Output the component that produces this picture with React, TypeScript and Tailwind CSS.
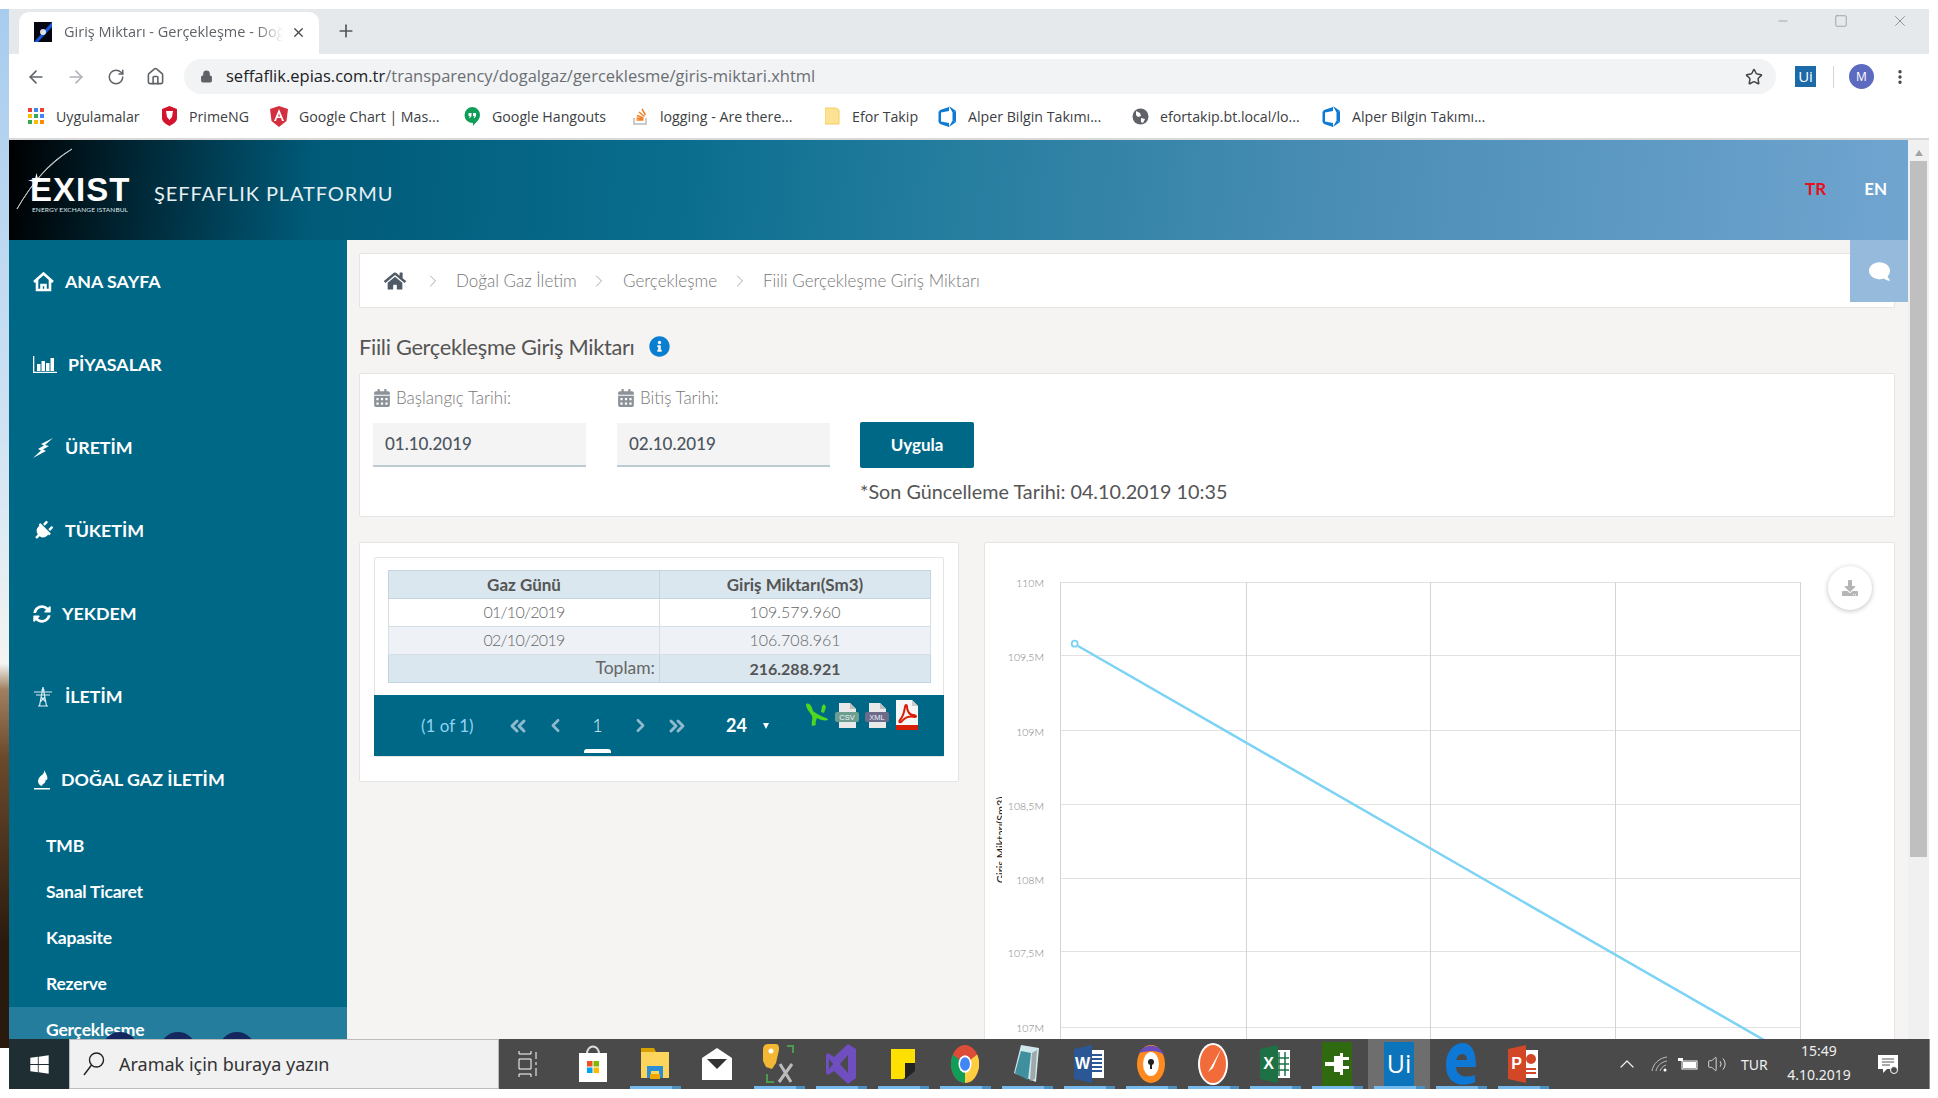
import React from 'react';
import { ArrowLeft, ArrowRight, RotateCw, Home, Lock, Star, EllipsisVertical, X, Plus, Minus, Square, ChevronRight, ChevronLeft, ChevronsLeft, ChevronsRight, ChevronUp, Volume2 } from 'lucide-react';
import { FaHome, FaPlug, FaSyncAlt, FaInfoCircle, FaComment, FaWindows, FaDownload, FaCalendarAlt } from 'react-icons/fa';

const Bars = () => (
  <svg width="24" height="17" viewBox="0 0 24 17" fill="white" className="shrink-0"><path d="M0 0h1.300v15.700H24V17H0z" /><rect x="4" y="8" width="3.500" height="7" /><rect x="8.500" y="5" width="3.500" height="10" /><rect x="13" y="7" width="3.500" height="8" /><rect x="17.500" y="2" width="3.500" height="13" /></svg>
);
const Pylon = () => (
  <svg width="20" height="20" viewBox="0 0 20 20" fill="none" stroke="#dbeef5" strokeWidth="1.200"><path d="M1 5h18M3 8h14M10 0L6.500 19M10 0l3.500 19M8 10l5 5M12 10l-5 5M5 19h10" /><path d="M8.500 3h3" /></svg>
);
const Flame = () => (
  <svg width="18" height="20" viewBox="0 0 18 20" fill="white"><path d="M11 0C12 4 8 5 6 8c-2 3-1 7 3 8 0-1 1-2 2-2.500 1-1 2-2 1.500-4C14 11 15 9 14 6c-.5-2-2-4-3-6z" /><rect x="1" y="18" width="16" height="1.500" /></svg>
);

const Icon = ({ name }: { name: string }) => {
  if (name === 'home') return <svg width="21" height="20" viewBox="0 0 21 20" fill="none" stroke="white" strokeWidth="2.600"><path d="M1 10L10.500 1.500 20 10M4 8v10h13V8M8.500 18v-5h4v5" /></svg>;
  if (name === 'bars') return <Bars />;
  if (name === 'bolt') return <svg width="21" height="20" viewBox="0 0 21 20" fill="white"><path d="M20 0L8 6l3 1.500L5 11l3 1.500L0 20l13-7-3-1.500 6-3.500-4-1z" /></svg>;
  if (name === 'plug') return <FaPlug size={20} color="white" className="rotate-45" />;
  if (name === 'sync') return <FaSyncAlt size={18} color="white" />;
  if (name === 'pylon') return <Pylon />;
  return <Flame />;
};

const menu = [
  { t: 'ANA SAYFA', i: 'home', c: 'ml-[11px]' },
  { t: 'PİYASALAR', i: 'bars', c: 'ml-[14px]' },
  { t: 'ÜRETİM', i: 'bolt', c: 'ml-[11px]' },
  { t: 'TÜKETİM', i: 'plug', c: 'ml-[11px]' },
  { t: 'YEKDEM', i: 'sync', c: 'ml-[8px]' },
  { t: 'İLETİM', i: 'pylon', c: 'ml-[11px]' },
  { t: 'DOĞAL GAZ İLETİM', i: 'flame', c: 'ml-[7px]' },
];

const Cal = () => <FaCalendarAlt size={18} className="text-[#8b9299]" />;

const Bm = ({ w, icon, t }: { w: string; icon: React.ReactNode; t: string }) => (
  <div className={`${w} flex items-center gap-3 shrink-0`}>
    <span className="w-4 h-4 flex items-center justify-center shrink-0">{icon}</span>
    <span className="text-[14.200px] text-[#3c4043] whitespace-nowrap">{t}</span>
  </div>
);

const Devops = () => (
  <svg width="20" height="21" viewBox="0 0 20 21" fill="#0f7ad1" className="shrink-0"><path d="M11 5L3 6.500v9L11 17v4l-9-3-1.500-2V6L2 4l9-3z" /><path d="M11 0l7 5-3.500 1.500zM11 21l7-5-3.500-1.500z" /><path d="M14.500 6.500L18 5v11l-3.500-1.500z" /></svg>
);

const Apps = () => (
  <svg width="16" height="16" viewBox="0 0 16 16">
    {[['#ea4335', 0, 0], ['#4285f4', 6, 0], ['#ea4335', 12, 0], ['#fbbc05', 0, 6], ['#34a853', 6, 6], ['#4285f4', 12, 6], ['#34a853', 0, 12], ['#fbbc05', 6, 12], ['#fb8c00', 12, 12]].map(([c, x, y], i) => (
      <rect key={i} x={x as number} y={y as number} width="4" height="4" fill={c as string} />
    ))}
  </svg>
);

const bookmarks = [
  { w: 'w-[133px]', t: 'Uygulamalar', icon: <Apps /> },
  { w: 'w-[110px]', t: 'PrimeNG', icon: <svg width="17" height="20" viewBox="0 0 17 20" className="shrink-0"><path d="M8.500 0L16 3v9c0 4-4 6-7.500 8C5 18 1 16 1 12V3z" fill="#d3142f" /><path d="M5 5h7l-1 6-2.500 3L6 11z" fill="white" /></svg> },
  { w: 'w-[193px]', t: 'Google Chart | Mas...', icon: <svg width="18" height="21" viewBox="0 0 18 21" className="shrink-0"><path d="M9 0l9 3-1.500 12L9 21l-7.500-6L0 3z" fill="#d32f3f" /><path d="M9 3l-5 12h2l1-3h4l1 3h2zM8 10.500l1-3 1 3z" fill="white" /></svg> },
  { w: 'w-[168px]', t: 'Google Hangouts', icon: <svg width="16" height="19" viewBox="0 0 16 19"><path d="M8 0a8 8 0 018 8c0 5-5 8-7 11v-3a8 8 0 01-1-16z" fill="#0f9d58" /><path d="M4.500 6h3v3L6 11H5l1-2H4.500zM9 6h3v3l-1.500 2h-1l1-2H9z" fill="white" /></svg> },
  { w: 'w-[192px]', t: 'logging - Are there...', icon: <svg width="15" height="18" viewBox="0 0 15 18"><path d="M1 11v6h12v-6" fill="none" stroke="#bcbbbb" strokeWidth="1.500" /><path d="M3.500 13h7M3.500 11l7 1M4 8.500l6.500 2.500M6 5l5.500 4.500M9 2l3.500 6" stroke="#f48024" strokeWidth="1.500" /></svg> },
  { w: 'w-[116px]', t: 'Efor Takip', icon: <svg width="15" height="18" viewBox="0 0 15 18"><path d="M0 1h11l3 2v14H0z" fill="#fde293" stroke="#f5cf5f" /></svg> },
  { w: 'w-[192px]', t: 'Alper Bilgin Takımı...', icon: <Devops /> },
  { w: 'w-[192px]', t: 'efortakip.bt.local/lo...', icon: <svg width="17" height="17" viewBox="0 0 17 17" className="shrink-0"><circle cx="8.500" cy="8.500" r="8" fill="#5f6368" /><path d="M4 3l4 2 1 3-3 1-2-2zM9 10l4 1-2 4-2-1z" fill="white" /></svg> },
  { w: 'w-[150px]', t: 'Alper Bilgin Takımı...', icon: <Devops /> },
];

const FileIcon = ({ label, band }: { label: string; band: string }) => (
  <svg width="24" height="26" viewBox="0 0 24 26">
    <path d="M4 0h11l6 6v19H4z" fill="#e9e9e9" />
    <path d="M15 0l6 6h-6z" fill="#bfbfbf" />
    <rect x="0" y="9" width="24" height="10" rx="2" fill={band} />
    <text x="12" y="17" textAnchor="middle" fontSize="7.500" fill="#eef" fontFamily="'Liberation Sans',sans-serif">{label}</text>
  </svg>
);

const TaskIcons: Record<string, React.ReactNode> = {
  store: <svg width="30" height="38" viewBox="0 0 30 38"><path d="M9 9c0-10 12-10 12 0" fill="none" stroke="#ddd" strokeWidth="2" /><rect x="1" y="8" width="28" height="29" fill="white" /><rect x="9" y="16" width="5.500" height="5.500" fill="#f25022" /><rect x="15.500" y="16" width="5.500" height="5.500" fill="#7fba00" /><rect x="9" y="22.500" width="5.500" height="5.500" fill="#00a4ef" /><rect x="15.500" y="22.500" width="5.500" height="5.500" fill="#ffb900" /></svg>,
  folder: <svg width="30" height="32" viewBox="0 0 30 32"><path d="M1 0h13l2 4H1z" fill="#d9a100" /><rect x="1" y="4" width="28" height="26" fill="#fdd45c" /><path d="M7 30V18h16v12h-4v-7h-8v7z" fill="#2b8fd6" /><rect x="10" y="26" width="10" height="5" fill="#f3a600" /></svg>,
  mail: <svg width="30" height="32" viewBox="0 0 30 32"><path d="M0 10L15 0l15 10v22H0z" fill="white" /><path d="M5 11h20L15 21z" fill="#333" /></svg>,
  tools: <svg width="32" height="40" viewBox="0 0 32 40"><path d="M5 0h8c3 0 3 3 3 6l-3 13-4 6-6-2-3-6V6c0-3 1-6 5-6z" fill="#f2b733" /><circle cx="8" cy="7" r="2.500" fill="white" /><path d="M24 2h6v7M4 30v8h7" fill="none" stroke="#4c9a4c" strokeWidth="2" /><path d="M17 20l11 18M29 20L16 38" stroke="#bbb" strokeWidth="3" /></svg>,
  vs: <svg width="30" height="40" viewBox="0 0 30 40"><path d="M22 0l8 5v29l-8 6-14-13-6 4-2-2V11l2-2 6 4zM22 11l-8 9 8 9zM3 15v10l4-5z" fill="#6f4fc0" /></svg>,
  sticky: <svg width="24" height="30" viewBox="0 0 24 30"><path d="M0 0h24v21l-12 9H0z" fill="#ffe000" /><path d="M24 14v8l-10 8v-16z" fill="#222" /></svg>,
  chrome: <svg width="28" height="38" viewBox="0 0 28 28" preserveAspectRatio="none"><circle cx="14" cy="14" r="14" fill="#dd4b39" /><path d="M14 14L1.800 7A14 14 0 002 21 14 14 0 0014 28z" fill="#0f9d58" /><path d="M14 14v14A14 14 0 0026.200 7z" fill="#ffcd40" /><circle cx="14" cy="14" r="6.500" fill="white" /><circle cx="14" cy="14" r="5" fill="#4285f4" /></svg>,
  glass: <svg width="26" height="38" viewBox="0 0 26 38"><path d="M7 0l18 3-3 34L0 28z" fill="#cfe8ec" /><path d="M1 28L7 6l10 2-3 27z" fill="#3f8f9f" /><path d="M18 8l5-3-2 29-5 2z" fill="#9fa9ab" /></svg>,
  word: <svg width="30" height="38" viewBox="0 0 30 38"><rect x="14" y="5" width="16" height="28" fill="white" /><path d="M17 10h11M17 14h11M17 18h11M17 22h11M17 26h11" stroke="#2b5797" strokeWidth="2" /><path d="M0 4L18 0v38L0 34z" fill="#2b5797" /><text x="8.500" y="24" textAnchor="middle" fontSize="16" fontWeight="700" fill="white" fontFamily="'Liberation Sans',sans-serif">W</text></svg>,
  orange: <svg width="28" height="38" viewBox="0 0 28 38"><ellipse cx="14" cy="19" rx="14" ry="19" fill="#ff8a1f" /><path d="M2 8C8-2 22-2 27 10 20 4 10 6 2 8z" fill="#6b4bbd" /><ellipse cx="14" cy="19" rx="8" ry="12" fill="white" /><circle cx="14" cy="17" r="3" fill="#222" /><rect x="13" y="18" width="2" height="6" fill="#222" /></svg>,
  postman: <svg width="30" height="42" viewBox="0 0 30 42"><ellipse cx="15" cy="21" rx="15" ry="21" fill="#fff" /><ellipse cx="15" cy="21" rx="13" ry="19" fill="#f26b3a" /><path d="M23 6l-10 18-3 5 5-4 8-19z" fill="white" /></svg>,
  excel: <svg width="30" height="38" viewBox="0 0 30 38"><rect x="14" y="5" width="16" height="28" fill="white" /><path d="M19 7v24M25 7v24M16 13h13M16 19h13M16 25h13" stroke="#1e7145" strokeWidth="1.500" /><path d="M0 4L18 0v38L0 34z" fill="#1e7145" /><text x="8.500" y="24" textAnchor="middle" fontSize="16" fontWeight="700" fill="white" fontFamily="'Liberation Sans',sans-serif">X</text></svg>,
  plug: <svg width="30" height="44" viewBox="0 0 30 44"><rect width="30" height="44" fill="#2f6a10" /><path d="M3 20h9v-6h6v-3h3v22h-3v-3h-6v-6H3zM21 15h6v3h-6zM21 24h6v3h-6z" fill="white" /></svg>,
  ui: <div className="w-[30px] h-[44px] bg-[#0b74bb] text-white text-[25px] flex items-center justify-center font-['Open_Sans',sans-serif]">Ui</div>,
  edge: <svg width="30" height="42" viewBox="0 0 30 42"><path d="M0 22C0 8 8 0 17 0c9 0 13 9 13 24H10c0 8 8 12 19 8v7c-12 6-29 3-29-17zM10 17h11c0-8-9-8-11 0z" fill="#0d78d6" /></svg>,
  ppt: <svg width="30" height="38" viewBox="0 0 30 38"><rect x="14" y="5" width="16" height="28" fill="white" /><circle cx="23" cy="14" r="5" fill="#d24726" /><path d="M17 24h11M17 28h11" stroke="#d24726" strokeWidth="2" /><path d="M0 4L18 0v38L0 34z" fill="#d24726" /><text x="8.500" y="24" textAnchor="middle" fontSize="16" fontWeight="700" fill="white" fontFamily="'Liberation Sans',sans-serif">P</text></svg>,
};

const tasks = [
  { k: 'store', u: false }, { k: 'folder', u: true }, { k: 'mail', u: false }, { k: 'tools', u: true },
  { k: 'vs', u: true }, { k: 'sticky', u: true }, { k: 'chrome', u: true }, { k: 'glass', u: true },
  { k: 'word', u: true }, { k: 'orange', u: true }, { k: 'postman', u: true }, { k: 'excel', u: true },
  { k: 'plug', u: true }, { k: 'ui', u: true }, { k: 'edge', u: true }, { k: 'ppt', u: true },
];

const gridY = [582, 655, 730, 804, 878, 951, 1027];
const gridX = [1060, 1246, 1430, 1615, 1800];
const yLabels: [string, number][] = [['110M', 587], ['109,5M', 661], ['109M', 736], ['108,5M', 810], ['108M', 884], ['107,5M', 957], ['107M', 1032]];

const Chart = () => (
  <svg width="910" height="558" viewBox="985 543 910 558" className="block">
    <defs><clipPath id="axis"><rect x="996" y="796" width="6" height="90" /></clipPath></defs>
    {gridY.map((y) => <line key={y} x1="1060" x2="1800" y1={y + 0.5} y2={y + 0.5} stroke="#e2e2e2" strokeWidth="1" />)}
    {gridX.map((x) => <line key={x} x1={x + 0.5} x2={x + 0.5} y1="582" y2="1100" stroke="#d4d4d4" strokeWidth="1" />)}
    {yLabels.map(([t, y]) => <text key={t} x="1044" y={y} textAnchor="end" fontSize="10.500" fontWeight="300" fill="#7d7d7d" fontFamily="Lato, sans-serif">{t}</text>)}
    <g clipPath="url(#axis)">
      <text x="0" y="0" transform="translate(1005 883) rotate(-90)" fontSize="11" fill="#222" fontFamily="Lato, sans-serif">Giriş Miktarı(Sm3)</text>
    </g>
    <line x1="1078" y1="646" x2="1790" y2="1055" stroke="#7dd3f5" strokeWidth="2.500" />
    <circle cx="1074.700" cy="643.700" r="3" fill="white" stroke="#7dd3f5" strokeWidth="1.800" />
  </svg>
);

export default function App() {
  return (
    <div className="w-[1938px] h-[1098px] overflow-hidden bg-white flex font-['Lato',sans-serif] pt-[9px] pb-[9px]">
      <div className="w-[9px] h-[1039px] shrink-0 bg-[linear-gradient(180deg,#a7ccee_0%,#cfe2f3_40%,#f4f4f2_63%,#a08060_65.500%,#6b4a2c_72%,#2a1a0e_90%,#2a1a0e_100%)]" />
      <div className="w-[1920px] h-full flex flex-col shrink-0">
        {/* tab strip */}
        <div className="h-[45px] bg-[#e6e9ec] flex items-start shrink-0 font-['Open_Sans',sans-serif]">
          <div className="ml-[10px] mt-[3px] w-[300px] h-[42px] bg-white rounded-t-[10px] flex items-center pl-[15px] pb-[2px]">
            <svg width="18" height="20" viewBox="0 0 18 20" className="shrink-0"><rect width="18" height="20" fill="#05060f" /><path d="M18 0L0 20h4L18 5z" fill="#1957d8" /><circle cx="9" cy="10" r="3" fill="white" opacity=".85" /></svg>
            <span className="ml-[12px] w-[219px] overflow-hidden whitespace-nowrap text-[14.500px] text-[#5f6368] [mask-image:linear-gradient(90deg,black_88%,transparent)]">Giriş Miktarı - Gerçekleşme - Doğal Gaz</span>
            <X size={15} strokeWidth={2} className="ml-[8px] text-[#444] shrink-0" />
          </div>
          <Plus size={20} strokeWidth={2} className="ml-[17px] mt-[12px] text-[#555]" />
          <div className="flex-1 flex justify-end items-center h-[24px] text-[#777]">
            <Minus size={14} strokeWidth={1} className="mr-[44px]" />
            <Square size={14} strokeWidth={1} className="mr-[43px]" />
            <X size={18} strokeWidth={1} className="mr-[20px]" />
          </div>
        </div>
        {/* toolbar */}
        <div className="h-[45px] flex items-center shrink-0 pl-[17px] font-['Open_Sans',sans-serif]">
          <ArrowLeft size={20} className="text-[#5f6368]" strokeWidth={2} />
          <ArrowRight size={20} className="ml-[20px] text-[#b0b3b7]" strokeWidth={2} />
          <RotateCw size={18} className="ml-[21px] text-[#5f6368]" strokeWidth={2} />
          <Home size={19} className="ml-[21px] text-[#5f6368]" strokeWidth={2} />
          <div className="ml-[19px] w-[1592px] h-[35px] rounded-full bg-[#f1f3f4] flex items-center pl-[16px] shrink-0">
            <Lock size={13} fill="#5f6368" className="text-[#5f6368]" />
            <span className="ml-[13px] text-[16.500px] text-[#202124] whitespace-nowrap">seffaflik.epias.com.tr<span className="text-[#6b6f74]">/transparency/dogalgaz/gerceklesme/giris-miktari.xhtml</span></span>
            <Star size={18} strokeWidth={2} className="ml-auto mr-[13px] text-[#444]" />
          </div>
          <div className="ml-[19px] w-[21px] h-[21px] bg-[#1d6aa8] text-white text-[15px] flex items-center justify-center">Ui</div>
          <div className="ml-[17px] w-px h-[22px] bg-[#d5d5d5]" />
          <div className="ml-[15px] w-[25px] h-[25px] rounded-full bg-[#5c6bc0] text-white text-[12px] flex items-center justify-center">M</div>
          <EllipsisVertical size={18} className="ml-[17px] text-[#444]" strokeWidth={2.500} />
        </div>
        {/* bookmarks */}
        <div className="h-[41px] border-b-2 border-[#d9d9d9] flex items-center pl-[19px] pb-[4px] shrink-0 font-['Open_Sans',sans-serif]">
          {bookmarks.map((b, i) => <Bm key={i} {...b} />)}
        </div>
        {/* page */}
        <div className="flex-1 min-h-0 flex overflow-hidden">
          <div className="w-[1899px] shrink-0 flex flex-col relative">
            <header className="h-[100px] shrink-0 flex items-center bg-[linear-gradient(95deg,#000000_0%,#00222f_6%,#005a78_16%,#0a6d8e_35%,#267e9f_50%,#4a8db5_70%,#70a5d0_100%)] relative">
              <div className="ml-[21px] flex flex-col w-[100px] text-white pt-[10px]">
                <span className="font-['Liberation_Sans',sans-serif] font-bold text-[33px] leading-[30px] tracking-[1px] whitespace-nowrap">EXIST</span>
                <span className="text-[6.500px] leading-[10px] whitespace-nowrap tracking-[0.1px] text-[#dfe8ec] ml-[2px]">ENERGY EXCHANGE ISTANBUL</span>
              </div>
              <svg width="60" height="62" viewBox="0 0 60 62" className="absolute left-[4px] top-[8px]"><path d="M59 1C36 14 20 34 4 61 17 38 34 17 59 1z" stroke="white" strokeWidth="1" fill="white" opacity=".75" /><path d="M22 31l1.500-6 1.500 6 7 1.500-7 1.500-1.500 8-1.500-8-7-1.500z" fill="white" /></svg>
              <span className="ml-[24px] mt-[6px] text-[20px] font-normal tracking-[0.9px] text-[#e7f0f4] whitespace-nowrap">ŞEFFAFLIK PLATFORMU</span>
              <div className="ml-auto flex gap-[38px] mr-[21px] mb-[3px] text-[17px] font-bold">
                <span className="text-[#e80e1a]">TR</span>
                <span className="text-white">EN</span>
              </div>
            </header>
            <div className="flex-1 min-h-0 flex">
              {/* sidebar */}
              <nav className="w-[338px] shrink-0 bg-[#006887] flex flex-col text-white">
                {menu.map((m) => (
                  <div key={m.t} className="h-[83px] shrink-0 flex items-center pl-[24px]">
                    <span className="w-[21px] flex justify-start items-center shrink-0"><Icon name={m.i} /></span>
                    <span className={`${m.c} font-bold text-[17.800px] whitespace-nowrap`}>{m.t}</span>
                  </div>
                ))}
                <div className="mt-[2px]">
                  {['TMB', 'Sanal Ticaret', 'Kapasite', 'Rezerve'].map((s) => (
                    <div key={s} className="h-[46px] flex items-center pl-[37px] text-[17.500px] font-bold tracking-[-0.2px]">{s}</div>
                  ))}
                  <div className="h-[46px] flex items-center pl-[37px] text-[17.500px] font-bold tracking-[-0.2px] bg-[#247d9c] relative">
                    Gerçekleşme
                    <span className="absolute left-[93px] top-[25px] w-9 h-9 rounded-full bg-[#14285f]" />
                    <span className="absolute left-[151px] top-[25px] w-9 h-9 rounded-full bg-[#14285f]" />
                    <span className="absolute left-[210px] top-[25px] w-9 h-9 rounded-full bg-[#14285f]" />
                  </div>
                </div>
              </nav>
              {/* content */}
              <main className="flex-1 min-w-0 bg-[#f5f4f2] pl-[12px] pr-[13px] pt-[13px]">
                <div className="h-[55px] bg-white border border-[#e4e4e4] rounded-[2px] flex items-center text-[17px] font-light text-[#777] whitespace-nowrap">
                  <FaHome size={22} className="ml-[24px] text-[#4f5b66]" />
                  <ChevronRight size={20} strokeWidth={1} className="ml-[17px] text-[#999]" />
                  <span className="ml-[13px] w-[133px]">Doğal Gaz İletim</span>
                  <ChevronRight size={20} strokeWidth={1} className="text-[#999]" />
                  <span className="ml-[14px] w-[94px]">Gerçekleşme</span>
                  <ChevronRight size={20} strokeWidth={1} className="ml-[13px] text-[#999]" />
                  <span className="ml-[13px]">Fiili Gerçekleşme Giriş Miktarı</span>
                </div>
                <div className="h-[65px] flex items-center pt-[14px]">
                  <h1 className="text-[21.800px] text-[#555] font-normal tracking-[-0.3px] whitespace-nowrap">Fiili Gerçekleşme Giriş Miktarı</h1>
                  <FaInfoCircle size={21} className="ml-[14px] mb-[3px] text-[#0a7ed0]" />
                </div>
                {/* filter */}
                <div className="h-[144px] bg-white border border-[#e4e4e4] rounded-[2px] pl-[13px] pt-[12px] flex">
                  <div className="w-[213px]">
                    <div className="flex items-center gap-[5px] h-[24px] text-[17px] font-light text-[#777] whitespace-nowrap"><Cal />Başlangıç Tarihi:</div>
                    <div className="mt-[13px] h-[44px] bg-[#f4f4f4] border-b-2 border-[#bccbd2] flex items-center pl-[12px] text-[17px] font-medium text-[#4b5560]">01.10.2019</div>
                  </div>
                  <div className="w-[213px] ml-[31px]">
                    <div className="flex items-center gap-[5px] h-[24px] text-[17px] font-light text-[#777] whitespace-nowrap"><Cal />Bitiş Tarihi:</div>
                    <div className="mt-[13px] h-[44px] bg-[#f4f4f4] border-b-2 border-[#bccbd2] flex items-center pl-[12px] text-[17px] font-medium text-[#4b5560]">02.10.2019</div>
                  </div>
                  <div className="ml-[30px]">
                    <div className="mt-[36px] w-[114px] h-[46px] rounded-[2px] bg-[#006887] text-white font-bold text-[17px] flex items-center justify-center">Uygula</div>
                    <div className="mt-[9px] text-[19.800px] text-[#555] whitespace-nowrap">*Son Güncelleme Tarihi: 04.10.2019 10:35</div>
                  </div>
                </div>
                {/* lower */}
                <div className="mt-[25px] flex gap-[25px] items-start">
                  <div className="w-[600px] h-[240px] shrink-0 bg-white border border-[#e4e4e4] rounded-[2px] p-[14px]">
                    <div className="h-[200px] border border-[#e4e4e4] rounded-[2px] flex flex-col">
                      <div className="px-[13px] pt-[12px] h-[137px] shrink-0">
                        <table className="w-[543px] border-collapse text-[16px] text-[#666] table-fixed">
                          <tbody>
                            <tr className="h-[28px] bg-[#dae7ef] font-bold text-[#555] text-[17px]">
                              <td className="w-[271px] border border-[#c2d5e0] text-center">Gaz Günü</td>
                              <td className="border border-[#c2d5e0] text-center">Giriş Miktarı(Sm3)</td>
                            </tr>
                            <tr className="h-[28px] font-light">
                              <td className="border border-[#d5dfe6] text-center tracking-[-0.7px] pb-[2px]">01/10/2019</td>
                              <td className="border border-[#d5dfe6] text-center pb-[2px]">109.579.960</td>
                            </tr>
                            <tr className="h-[28px] bg-[#eef2f6] font-light">
                              <td className="border border-[#d5dfe6] text-center tracking-[-0.7px] pb-[2px]">02/10/2019</td>
                              <td className="border border-[#d5dfe6] text-center pb-[2px]">106.708.961</td>
                            </tr>
                            <tr className="h-[28px] bg-[#dae7ef]">
                              <td className="border border-[#c2d5e0] text-right pr-[4px] text-[17.500px]">Toplam:</td>
                              <td className="border border-[#c2d5e0] text-center font-bold text-[#555]">216.288.921</td>
                            </tr>
                          </tbody>
                        </table>
                      </div>
                      <div className="h-[61px] mx-[-1px] bg-[#006887] flex shrink-0 text-white">
                        <div className="ml-[47px] w-[85px] self-center text-[17px] text-[#8fd3f2] whitespace-nowrap">(1 of 1)</div>
                        <div className="w-[24px] flex items-center justify-center"><ChevronsLeft size={24} className="text-[#8fb9cc]" strokeWidth={3} /></div>
                        <div className="ml-[14px] w-[22px] flex items-center justify-center"><ChevronLeft size={21} className="text-[#8fb9cc]" strokeWidth={3} /></div>
                        <div className="ml-[18px] w-[27px] flex items-center justify-center relative text-[18px] font-light text-[#d8eef6]">1<span className="absolute left-0 right-0 bottom-[3px] h-[4px] bg-white rounded-t-[3px]" /></div>
                        <div className="ml-[17px] w-[24px] flex items-center justify-center"><ChevronRight size={21} className="text-[#8fb9cc]" strokeWidth={3} /></div>
                        <div className="ml-[13px] w-[24px] flex items-center justify-center"><ChevronsRight size={24} className="text-[#8fb9cc]" strokeWidth={3} /></div>
                        <div className="ml-[37px] w-[37px] self-center font-bold text-[18px]">24</div>
                        <div className="w-0 h-0 self-center border-x-[3.500px] border-x-transparent border-t-[6px] border-t-white" />
                        <div className="ml-[36px] flex items-start gap-[6px] pt-[8px]">
                          <svg width="24" height="24" viewBox="0 0 24 24"><path d="M1 1c4-2 6 3 7 7 2 2 5 3 8 5 2 1 7 2 7 4-3 1-8 0-11-2-1 3-2 5-1 7l-4 1c-1-4 1-7 0-10C5 9 1 6 1 1z" fill="#4fd61f" /><path d="M17 3l2-2 2 3-2 6-3-1z" fill="#4fd61f" /></svg>
                          <FileIcon label="CSV" band="#6e9e8f" />
                          <FileIcon label="XML" band="#6c6c8a" />
                          <svg width="24" height="30" viewBox="0 0 24 30" className="-mt-[3px]"><path d="M1 0h16l6 6v24H1z" fill="#f7f7f7" /><path d="M17 0l6 6h-6z" fill="#ccc" /><rect x="1" y="25" width="22" height="5" fill="#d81e05" /><path d="M11 5c-2 0 0 8-6 15-2 3 1 3 3 0 3-3 8-4 12-3 2 0 1-2-2-2-4 0-6-5-6-8 0-2 0-2-1-2z" fill="none" stroke="#d81e05" strokeWidth="2" /></svg>
                        </div>
                      </div>
                    </div>
                  </div>
                  <div className="flex-1 min-w-0 h-[560px] bg-white border border-[#e4e4e4] rounded-[2px] relative">
                    <Chart />
                    <div className="absolute left-[843px] top-[23px] w-11 h-11 rounded-full bg-white shadow-[0_1px_5px_rgba(0,0,0,0.25)] flex items-center justify-center">
                      <FaDownload size={16} className="text-[#b5b5b5]" />
                    </div>
                  </div>
                </div>
              </main>
            </div>
            <div className="absolute left-[1841px] top-[100px] w-[58px] h-[62px] bg-[#8fb6da]/95 flex items-center justify-center">
              <FaComment size={21} className="text-white -scale-x-100" />
            </div>
          </div>
          {/* scrollbar */}
          <div className="w-[21px] shrink-0 bg-[#f0f0f0] flex flex-col items-center">
            <div className="h-[21px] flex items-center justify-center pt-[4px]">
              <div className="w-0 h-0 border-x-[4.500px] border-x-transparent border-b-[6px] border-b-[#a3a3a3]" />
            </div>
            <div className="w-[17px] h-[696px] bg-[#bfbfbf]" />
          </div>
        </div>
        {/* taskbar */}
        <div className="h-[50px] shrink-0 bg-[#4a4a4a] flex font-['Noto_Sans',sans-serif] text-white">
          <div className="w-[60px] bg-[#1e2e33] flex items-center justify-center shrink-0"><FaWindows size={21} /></div>
          <div className="w-[430px] bg-[#f1f1f1] border border-[#bcbcbc] flex items-center pl-[13px] shrink-0 text-[#333]">
            <svg width="22" height="26" viewBox="0 0 22 26" fill="none" stroke="#222" strokeWidth="1.400"><circle cx="13.500" cy="9" r="7" /><path d="M8.500 14L1 24" /></svg>
            <span className="ml-[14px] text-[18px]">Aramak için buraya yazın</span>
          </div>
          <div className="w-[58px] flex items-center justify-center shrink-0">
            <svg width="20" height="26" viewBox="0 0 20 26" fill="none" stroke="white" strokeWidth="1"><path d="M1 0v3h12V0M1 8h12v10H1zM1 26v-3h12v3M18 1v7M18 11v3M18 17v8" /></svg>
          </div>
          <div className="w-[5px] shrink-0" />
          {tasks.map((t) => (
            <div key={t.k} className={`w-[62px] shrink-0 relative flex items-center justify-center pb-[1px] ${t.k === 'ui' ? 'bg-[#6e6e6e]' : ''}`}>
              <span className="flex items-center justify-center h-[44px]">{TaskIcons[t.k]}</span>
              {t.u && <span className="absolute bottom-0 left-[6px] w-[51px] h-[3px] bg-[#76b9ed]"><span className="absolute right-0 top-0 w-[9px] h-[3px] bg-[#4f90c2]" /></span>}
            </div>
          ))}
          <div className="flex items-center text-[#f0f0f0]">
            <ChevronUp size={24} strokeWidth={1.200} className="ml-[61px]" />
            <svg width="18" height="16" viewBox="0 0 18 16" fill="none" stroke="#bbb" strokeWidth="1" className="ml-[12px]"><path d="M1 15C2 8 8 2 16 1M5 15C6 10 10 6 16 5M9 15c1-3 3-5 6-6" /><circle cx="14" cy="14" r="1.500" fill="white" stroke="none" /></svg>
            <svg width="20" height="12" viewBox="0 0 20 12" className="ml-[9px]"><rect x="4" y="3" width="15" height="8" fill="none" stroke="white" strokeWidth="1" /><rect x="5" y="4" width="13" height="6" fill="white" /><path d="M0 0h5v3H0z" fill="white" /></svg>
            <Volume2 size={20} strokeWidth={1} className="ml-[9px]" />
            <span className="ml-[14px] text-[14px] w-[34px]">TUR</span>
            <div className="ml-[8px] w-[72px] flex flex-col items-center text-[14px] leading-[24px] pb-[2px]">
              <span>15:49</span>
              <span>4.10.2019</span>
            </div>
            <svg width="20" height="19" viewBox="0 0 20 19" className="ml-[23px]"><path d="M0 0h20v14H9l-4 4v-4H0z" fill="white" /><path d="M4 4h12M4 7h12M4 10h8" stroke="#555" strokeWidth="1" /><circle cx="16" cy="15" r="3.500" fill="#4a4a4a" stroke="white" /></svg>
            <div className="ml-[31px] w-px h-[50px] bg-[#8a8a8a]" />
          </div>
        </div>
      </div>
    </div>
  );
}
